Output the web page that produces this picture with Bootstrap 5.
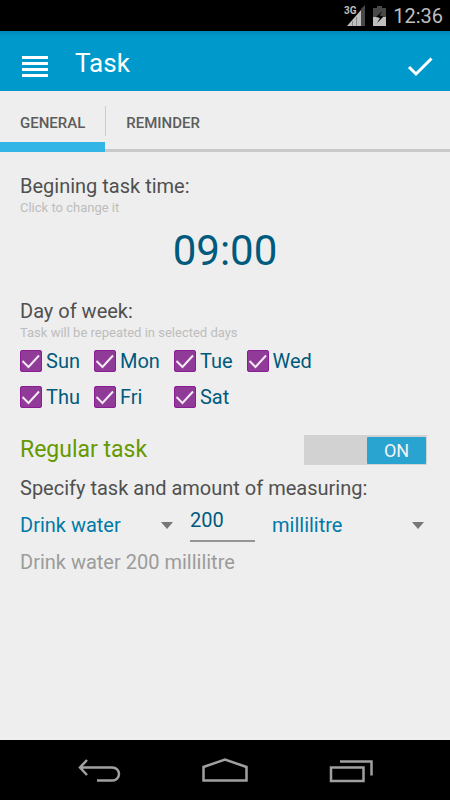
<!DOCTYPE html>
<html lang="en">
<head>
<meta charset="utf-8">
<meta name="viewport" content="width=device-width, initial-scale=1">
<title>Task</title>
<link href="https://cdn.jsdelivr.net/npm/bootstrap@5.3.0/dist/css/bootstrap.min.css" rel="stylesheet">
<style>
  body { font-family: Roboto, "Liberation Sans", sans-serif; font-size: 20px; line-height: 24px; background: #eee; color: #505050; }
  button, input, select { font: inherit; }
  .status-bar { height: 31px; background: #000; color: #bebebe; padding-right: 7px; gap: 7px; }
  .app-bar { height: 60px; background: linear-gradient(#0088b8, #0099cc 6px); padding: 0 16px 0 20px; }
  .app-title { font-size: 26px; font-weight: 400; line-height: 32px; color: #fff; margin: 3px 0 0 25px; }
  .app-bar .btn { line-height: 0; margin-top: 12px; }
  .tab-bar { height: 61px; border-bottom: 3px solid #c9c9c9; }
  .tab-bar .nav-link { height: 61px; padding: 12px 20px 0; font-size: 15px; font-weight: 500; line-height: 20px; color: #5c5c5c; border-bottom: 10px solid transparent; border-radius: 0; }
  .tab-bar .nav-link.active { border-bottom-color: #33b5e5; }
  .tab-rule { width: 1px; height: 30px; margin-top: 15px; background: #ccc; }
  main { padding: 22px 20px 0; }
  .section-title { font-size: 20px; line-height: 24px; font-weight: 400; margin: 0; }
  .hint { font-size: 13px; line-height: 20px; color: #bdbdbd; margin: 0; }
  .time-btn { font-size: 42px; line-height: 52px; color: #005a7d; margin: 7px 0 22px; }
  .days { display: grid; grid-template-columns: repeat(4, max-content); gap: 12px 14px; margin: 6px 0 26px; color: #005a7d; }
  .days .form-check-input { width: 22px; height: 22px; margin: 0; border-radius: 2px; border: 1px solid #8a1c96; }
  .days .form-check-input:checked { background-color: #903b98; border-color: #8a1c96;
    background-image: url("data:image/svg+xml,%3Csvg xmlns='http://www.w3.org/2000/svg' viewBox='0 0 20 20'%3E%3Cpath d='M1.5 10l6 6L18 4.500' fill='none' stroke='%23f3eaf4' stroke-width='2'/%3E%3C/svg%3E"); background-size: 100%; }
  .regular-row { padding-right: 3px; margin-bottom: 11px; }
  .regular { font-size: 23px; font-weight: 400; line-height: 28px; color: #669900; margin: 0; }
  .toggle { width: 123px; height: 30px; background: #d2d2d2; padding: 1px; }
  .toggle span { width: 59px; height: 27px; font-size: 18px; line-height: 27px; background: #29a3cf; color: #f4f4f4; border-radius: 1px; }
  .measure { gap: 17px; color: #0079a8; padding-right: 6px; margin-top: 5px; }
  .measure select { appearance: none; border: 0; border-radius: 0; padding: 0; height: 32px; margin-top: 4px; color: inherit;
    background: url("data:image/svg+xml,%3Csvg xmlns='http://www.w3.org/2000/svg' width='12' height='7'%3E%3Cpath d='M0 0h12L6 7z' fill='%23777'/%3E%3C/svg%3E") no-repeat right 13px; }
  .measure .task-pick { flex: 0 0 153px; }
  .measure .amount { flex: 0 0 65px; width: 65px; height: 37px; padding: 0 0 5px; border: 0; border-bottom: 2px solid #959595; border-radius: 0; background: none; color: #005a7d; }
  .summary { color: #9b9b9b; margin: 8px 0 0; }
  .nav-bar { height: 60px; background: #000; }
  .nav-bar .btn { width: 126px; line-height: 0; }
  .nav-bar path { fill: none; stroke: #a0a0a0; stroke-width: 3; }
</style>
</head>
<body class="d-flex flex-column min-vh-100">
  <div class="status-bar d-flex align-items-center justify-content-end">
    <svg width="22" height="22" viewBox="0 0 22 22" aria-label="3G signal">
      <path d="M17 21V4l4-4v21z" fill="#484848"/><path d="M3 21 17 5v16z" fill="#bebebe"/>
      <path d="M8.500 16v5M12.500 12v9" stroke="#888"/>
      <text x="0" y="9" font-size="10" font-weight="700" fill="#bebebe" stroke="#000" stroke-width="2" paint-order="stroke">3G</text>
    </svg>
    <svg width="13" height="20" viewBox="0 0 13 20" aria-label="Battery charging">
      <path d="M4 0h5v2h4v9H0V2h4z" fill="#484848"/><path d="M0 11h13v9H0z" fill="#bebebe"/>
      <path d="M9.500 5 3 11l4 1-3 5 6.500-6.500-4-1z" fill="#000"/>
    </svg>
    <span>12:36</span>
  </div>
  <header class="app-bar d-flex align-items-center">
    <button class="btn p-0 border-0" type="button" aria-label="Menu">
      <svg width="30" height="24" viewBox="0 0 30 24"><path d="M2 2.500h26M2 8.500h26M2 14.500h26M2 20.500h26" stroke="#fff" stroke-width="3"/></svg>
    </button>
    <h1 class="app-title">Task</h1>
    <button class="btn p-0 border-0 ms-auto" type="button" aria-label="Done">
      <svg width="28" height="24" viewBox="0 0 28 24"><path d="M3 12l7 7L25.500 3.500" fill="none" stroke="#fff" stroke-width="3"/></svg>
    </button>
  </header>
  <nav class="tab-bar d-flex" aria-label="Sections">
    <a class="nav-link active d-flex align-items-center" href="#general" aria-current="page">GENERAL</a>
    <span class="tab-rule"></span>
    <a class="nav-link d-flex align-items-center" href="#reminder">REMINDER</a>
  </nav>
  <main id="general" class="flex-grow-1">
    <h2 class="section-title">Begining task time:</h2>
    <p class="hint">Click to change it</p>
    <div class="text-center"><button class="time-btn btn p-0 border-0" type="button">09:00</button></div>
    <h2 class="section-title">Day of week:</h2>
    <p class="hint">Task will be repeated in selected days</p>
    <div class="days">
      <div class="d-flex align-items-center gap-1"><input class="form-check-input" type="checkbox" id="sun" checked><label for="sun">Sun</label></div>
      <div class="d-flex align-items-center gap-1"><input class="form-check-input" type="checkbox" id="mon" checked><label for="mon">Mon</label></div>
      <div class="d-flex align-items-center gap-1"><input class="form-check-input" type="checkbox" id="tue" checked><label for="tue">Tue</label></div>
      <div class="d-flex align-items-center gap-1"><input class="form-check-input" type="checkbox" id="wed" checked><label for="wed">Wed</label></div>
      <div class="d-flex align-items-center gap-1"><input class="form-check-input" type="checkbox" id="thu" checked><label for="thu">Thu</label></div>
      <div class="d-flex align-items-center gap-1"><input class="form-check-input" type="checkbox" id="fri" checked><label for="fri">Fri</label></div>
      <div class="d-flex align-items-center gap-1"><input class="form-check-input" type="checkbox" id="sat" checked><label for="sat">Sat</label></div>
    </div>
    <div class="regular-row d-flex align-items-center justify-content-between">
      <h2 class="regular" id="regular-label">Regular task</h2>
      <button class="toggle btn border-0 rounded-0 d-flex align-items-center justify-content-end" type="button" role="switch" aria-checked="true" aria-labelledby="regular-label"><span>ON</span></button>
    </div>
    <p class="section-title">Specify task and amount of measuring:</p>
    <div class="measure d-flex align-items-start">
      <select class="task-pick" aria-label="Task"><option>Drink water</option></select>
      <input class="amount" type="text" inputmode="numeric" value="200" aria-label="Amount">
      <select class="flex-grow-1" aria-label="Unit"><option>millilitre</option></select>
    </div>
    <p class="summary">Drink water 200 millilitre</p>
  </main>
  <footer class="nav-bar d-flex align-items-center justify-content-center">
    <button class="btn p-0 border-0" type="button" aria-label="Back">
      <svg width="44" height="26" viewBox="0 0 44 26"><path d="M10 3 3 10.500 10 18M3 10.500H35.500a6.500 6.500 0 0 1 0 13H20" style="stroke-width:2.500"/></svg>
    </button>
    <button class="btn p-0 border-0" type="button" aria-label="Home">
      <svg width="48" height="26" viewBox="0 0 48 26"><path d="M2.500 23.500V10L24 2.500 45.500 10v13.500z" style="stroke-width:2.500"/></svg>
    </button>
    <button class="btn p-0 border-0" type="button" aria-label="Recent apps">
      <svg width="44" height="26" viewBox="0 0 44 26"><path d="M2 10.500h32.500v13.500H2zM11 4.500h31.500v14" style="stroke-width:2.500"/></svg>
    </button>
  </footer>
<script src="https://cdn.jsdelivr.net/npm/bootstrap@5.3.0/dist/js/bootstrap.bundle.min.js"></script>
</body>
</html>
